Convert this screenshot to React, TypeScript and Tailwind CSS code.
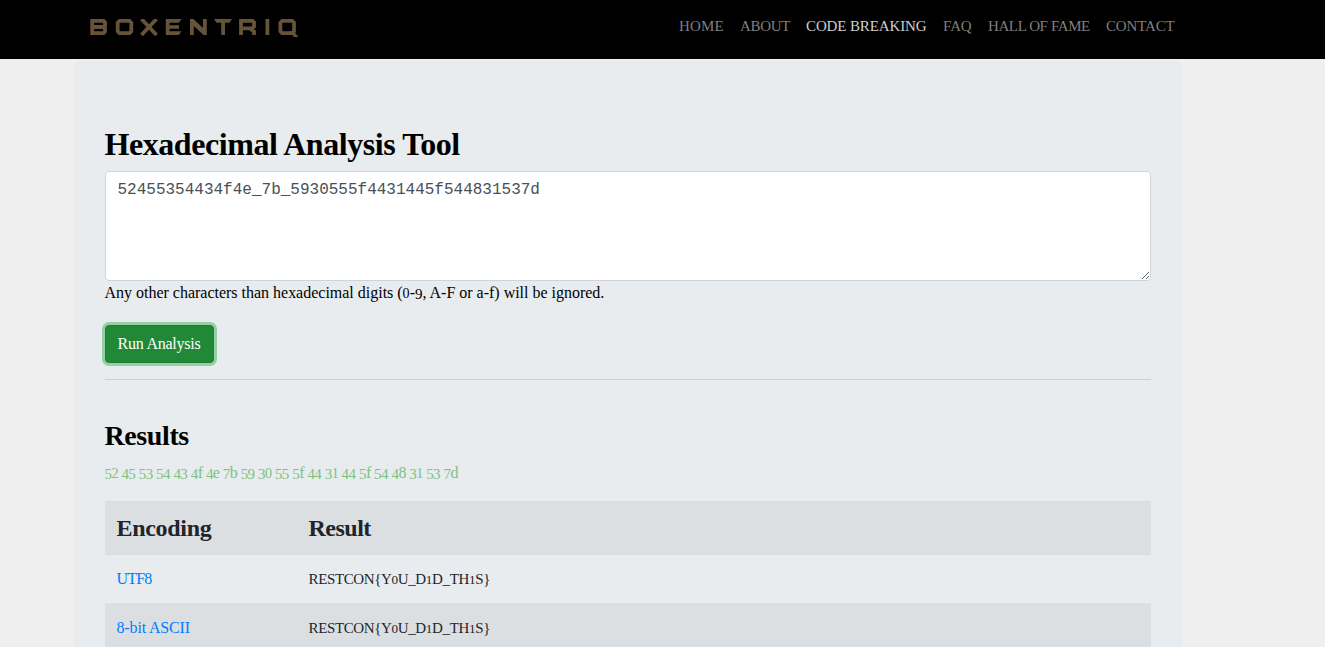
import React from "react";

/** Sets digits as old-style figures: short 0-2, lowered 3, 4, 5, 7 and 9. */
function OldStyle({ text }: { text: string }) {
  return (
    <>
      {text.split(/([0-9])/).map((part, i) => {
        if (part !== "" && "012".includes(part))
          return <span key={i} className="text-[0.88em] leading-none">{part}</span>;
        if (part !== "" && "34579".includes(part))
          return <span key={i} className="align-[-0.07em] text-[0.94em] leading-none">{part}</span>;
        return part;
      })}
    </>
  );
}

const nav = [
  { label: "HOME", style: "w-[61px] tracking-[0.2px] text-[#7f7f7f]" },
  { label: "ABOUT", style: "w-[66px] tracking-[-0.3px] text-[#7f7f7f]" },
  { label: "CODE BREAKING", style: "w-[137px] tracking-[-0.12px] text-[#cfcfcf]" },
  { label: "FAQ", style: "w-[45px] tracking-[-0.1px] text-[#7f7f7f]" },
  { label: "HALL OF FAME", style: "w-[118px] tracking-[-0.4px] text-[#7f7f7f]" },
  { label: "CONTACT", style: "w-[85px] tracking-[-0.15px] text-[#7f7f7f]" },
];

function Logo() {
  return (
    <svg width="210" height="19" viewBox="0 0 210 19" fill="none" stroke="#65533a" strokeWidth="3.8" aria-label="Boxentriq">
      <path d="M2.200 1.900H13.500L15 3.400V6.500L13.500 8L15 9.500V12.500L13.500 14.100H2.200ZM2.200 8H13.500" />
      <path d="M29.500 1.900H39.500L41.300 3.700V12.300L39.500 14.100H29.500L27.700 12.300V3.700Z" />
      <path d="M51.500 0L66.500 16M66.500 0L51.500 16" />
      <g fill="#65533a" stroke="none">
        <path d="M75.800 0H91.500L89 3.800H79.600V6.300H89V9.800H79.600V12.200H91.500L89 16H75.800Z" />
        <path d="M100 0H103.500L113 9V0H116.800V16H113.500L103.800 7V16H100Z" />
        <path d="M124 0H142L139.500 3.800H135V16H131.200V3.800H126.500Z" />
        <path d="M175.500 0H179.300V16H175.500Z" />
      </g>
      <path d="M151 16V1.900H162.500L164 3.400V7.500L162.500 9.400H151M160 9.800L164 12.500V16" />
      <path d="M192.200 1.900H202L204 3.700V12.300L202 14.100H192.200L190.400 12.300V3.700Z" />
      <path d="M199.500 12H203.500L208.500 18H204Z" fill="#65533a" stroke="none" />
    </svg>
  );
}

const rows = [
  { encoding: "UTF8", spacing: "tracking-[-0.8px]", band: "h-12" },
  { encoding: "8-bit ASCII", spacing: "tracking-[-0.15px]", band: "h-[49px] bg-[#dcdfe2]" },
];

export default function App() {
  return (
    <div className="h-[647px] overflow-hidden bg-[#efefef] font-['Liberation_Serif',serif] text-base leading-6 text-black">
      <header className="flex h-[59px] items-start bg-black pl-[90px]">
        <a href="#" className="mt-[19px] w-[581px]">
          <Logo />
        </a>
        <nav className="mt-[14px] flex text-[15px] leading-6">
          {nav.map((item) => (
            <a key={item.label} href="#" className={`shrink-0 whitespace-nowrap px-2 ${item.style}`}>
              {item.label}
            </a>
          ))}
        </nav>
      </header>

      <main className="ml-[72.5px] mt-0.5 h-[620px] w-[1110px] rounded-md bg-[#e8ecef] px-8 pt-16">
        <h1 className="mb-2 h-[38px] whitespace-nowrap text-[32px] font-bold leading-[38px] tracking-[-0.44px]">
          Hexadecimal Analysis Tool
        </h1>
        <textarea
          spellCheck={false}
          className="block h-[110px] w-[1046px] resize rounded border border-[#ced4da] bg-white px-3 py-1.5 font-['Liberation_Mono',monospace] text-base leading-6 text-[#495057]"
          defaultValue="52455354434f4e_7b_5930555f4431445f544831537d"
        />
        <p className="h-6 whitespace-nowrap tracking-[-0.01px]">
          <OldStyle text="Any other characters than hexadecimal digits (0-9, A-F or a-f) will be ignored." />
        </p>
        <button className="mt-5 block h-[38px] w-[109px] whitespace-nowrap rounded border border-[#1e7e34] bg-[#218838] tracking-[-0.25px] text-white ring-3 ring-[#97cfa5]">
          Run Analysis
        </button>
        <hr className="mt-4 border-t border-[#cfd3d6]" />

        <h2 className="mb-2 mt-[39px] h-[34px] text-[28px] font-bold leading-[34px] tracking-[-0.4px]">Results</h2>
        <p className="h-6 whitespace-nowrap tracking-[-0.57px] text-[#80c080]">
          <OldStyle text="52 45 53 54 43 4f 4e 7b 59 30 55 5f 44 31 44 5f 54 48 31 53 7d" />
        </p>

        <table className="mt-4 w-full table-fixed border-collapse text-left text-[#212529]">
          <colgroup>
            <col className="w-48" />
            <col />
          </colgroup>
          <thead>
            <tr className="h-[54px] bg-[#dcdfe2] text-2xl">
              <th className="px-3 py-0 font-bold tracking-[-0.3px]">Encoding</th>
              <th className="px-3 py-0 font-bold tracking-[-0.5px]">Result</th>
            </tr>
          </thead>
          <tbody>
            {rows.map((row) => (
              <tr key={row.encoding} className={row.band}>
                <td className="px-3 py-0">
                  <a href="#" className={`text-[#007bff] ${row.spacing}`}>{row.encoding}</a>
                </td>
                <td className="px-3 py-0 text-[15px] tracking-[-0.37px]">
                  <OldStyle text="RESTCON{Y0U_D1D_TH1S}" />
                </td>
              </tr>
            ))}
          </tbody>
        </table>
      </main>
    </div>
  );
}
